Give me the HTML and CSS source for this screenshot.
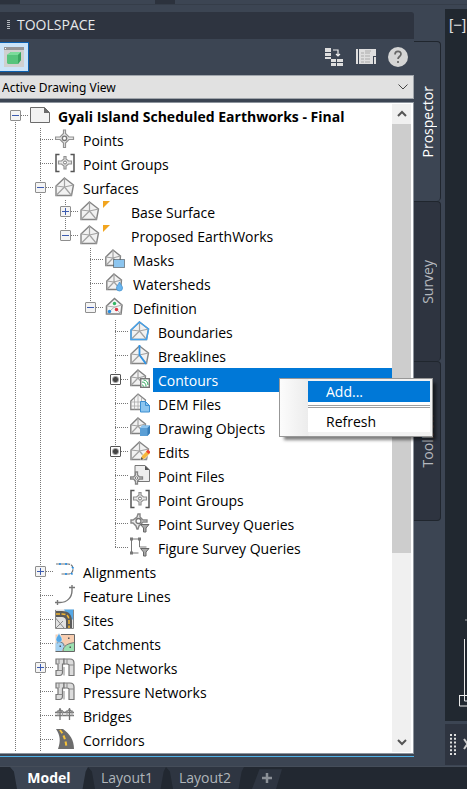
FILE: index.html
```
<!DOCTYPE html>
<html lang="en">
  <head>
    <meta charset="UTF-8">
    <meta name="viewport" content="width=device-width, initial-scale=1.0">
    <title>Toolspace</title>
    <link rel="stylesheet" href="styles.css">
  </head>

  <body>

    <!-- Icon sprite -->
    <svg class="sprite" aria-hidden="true">
      <symbol id="document" viewBox="0 0 20 20">
        <path d="M.5 2.5h14l5 5v10H.5z" fill="#f2f2f2" stroke="#6b6b6b"/>
        <path d="M14 2l6 6h-6z" fill="#6b6b6b"/>
      </symbol>
      <symbol id="points" viewBox="0 0 20 20">
        <path d="M8.500 1v3.500L5 8H.500v2.500H5l3.500 3.500v4.500h2V14l3.500-3.500h4.500V8H14l-3.500-3.500V1z" fill="#e8e8e8" stroke="#929292" stroke-width="1.200"/>
        <circle cx="9.500" cy="9.300" r="2.200" fill="#fff" stroke="#777" stroke-width="1.400"/>
      </symbol>
      <symbol id="point-group" viewBox="0 0 20 20">
        <path d="M4.500 1.500H1v17h3.500M15.500 1.500H19v17h-3.500" fill="none" stroke="#555" stroke-width="1.500"/>
        <path d="M9 3.500h2v2.500l2.500 2H16.500v3H13.500L11 13v3H9v-3l-2.500-2H3.500V8h3L9 6z" fill="#e8e8e8" stroke="#929292" stroke-width="1.200"/>
        <circle cx="10" cy="9.500" r="1.500" fill="#fff" stroke="#777"/>
      </symbol>
      <symbol id="surface" viewBox="0 0 20 20">
        <path d="M9.500 1L18.500 8 16.500 18.500H1V9z" fill="#f2f2f2" stroke="#858585" stroke-width="1.400"/>
        <path d="M9.500 1v9M1 9l8.500 1 9-2M1 18.500L9.500 10l7 8.500" fill="none" stroke="#a2a2a2" stroke-width="1.200"/>
      </symbol>
      <symbol id="small-surface" viewBox="0 0 20 20">
        <path d="M8 1l7.500 6-1 9.500H.8V8z" fill="#f2f2f2" stroke="#808080" stroke-width="1.400"/>
        <path d="M8 1v8M.8 8L8 9l7.500-2M.8 16.500L8 9l6.500 7.500" fill="none" stroke="#a2a2a2" stroke-width="1.200"/>
      </symbol>
      <symbol id="masks" viewBox="0 0 20 20">
        <use href="#small-surface"/>
        <rect x="8.500" y="10.500" width="11" height="8" fill="#8cc5ef" stroke="#333" stroke-dasharray="1 1"/>
      </symbol>
      <symbol id="watersheds" viewBox="0 0 20 20">
        <path d="M9 1l7.500 6-1 9.500H1.800V8z" fill="#f2f2f2" stroke="#808080" stroke-width="1.400"/>
        <path d="M9 1v8M1.800 8L9 9l7.500-2M1.800 16.500L9 9l6.500 7.500" fill="none" stroke="#a2a2a2" stroke-width="1.200"/>
        <path d="M14.500 9c1 2.500 3 4 3 6a3 3 0 0 1-6 0c0-2 2-3.500 3-6z" fill="#69b5ef" stroke="#4896d2" stroke-width=".8"/>
      </symbol>
      <symbol id="definition" viewBox="0 0 20 20">
        <path d="M9.500 1.500L17 8l-1 9H1.500V9z" fill="#f5f5f5" stroke="#808080" stroke-width="1.600"/>
        <path d="M1.500 9l8 1 7.500-2M1.500 17l8-7 6.500 7" fill="none" stroke="#b0b0b0"/>
        <circle cx="9.500" cy="6.500" r="1.700" fill="#30b562"/>
        <circle cx="11.500" cy="12.500" r="1.700" fill="#df3340"/>
        <circle cx="4.500" cy="14.500" r="1.700" fill="#258be0"/>
      </symbol>
      <symbol id="boundaries" viewBox="0 0 20 20">
        <use href="#surface"/>
        <path d="M9.500 1L18.500 8 16.500 18.500H1V9z" fill="none" stroke="#45a2ec" stroke-width="1.500"/>
      </symbol>
      <symbol id="breaklines" viewBox="0 0 20 20">
        <use href="#surface"/>
        <path d="M9.500 0v10l6.500 9" fill="none" stroke="#2d94e8" stroke-width="1.700"/>
      </symbol>
      <symbol id="contours" viewBox="0 0 20 20">
        <use href="#small-surface"/>
        <rect x="10.700" y="9.700" width="8.600" height="8.600" fill="#fff" stroke="#777" stroke-width="1.400"/>
        <path d="M12 13c3 0 4 2 4 4.500M12 16c1 0 1.500.500 1.500 1.500M13.500 11c2.500 0 4.500 2 4.500 5" fill="none" stroke="#32ad61"/>
      </symbol>
      <symbol id="dem" viewBox="0 0 20 20">
        <path d="M8 1l7.500 6-1 9.500H.8V8z" fill="#f5f5f5" stroke="#858585" stroke-width="1.300"/>
        <path d="M8 1v15.500M4.500 5v11.500M11.500 4v12.500M1 9h14M1 13h14" fill="none" stroke="#aaa" stroke-width=".8"/>
        <path d="M10.500 8.500h5l4 4v6.500h-9z" fill="#8cc5ef" stroke="#3c8ed0"/>
        <path d="M15.500 8.500v4h4" fill="none" stroke="#3c8ed0"/>
      </symbol>
      <symbol id="drawing-objects" viewBox="0 0 20 20">
        <use href="#small-surface"/>
        <path d="M10 11l2.500-2.500H20V16l-2.500 3H10z" fill="#5b9fd6"/>
        <path d="M10 11l2.500-2.500H20L17.500 11z" fill="#8cc4ee"/>
        <path d="M17.500 11L20 8.500V16l-2.500 3z" fill="#377db8"/>
      </symbol>
      <symbol id="edits" viewBox="0 0 20 20">
        <use href="#surface"/>
        <path d="M10.500 19l1-4 6-6 3 3-6 6z" fill="#f5b83d" stroke="#fff" stroke-width=".6"/>
        <path d="M16 10.500l2-2 2.500 2.500-2 2z" fill="#ee4433"/>
        <path d="M10.500 19l.8-3 2.200 2.200z" fill="#555"/>
      </symbol>
      <symbol id="point-files" viewBox="0 0 20 20">
        <path d="M5 .500h10l4.500 4.500v11.500H5z" fill="#eee" stroke="#777"/>
        <path d="M15 .500V5h4.500z" fill="#555"/>
        <path d="M5.500 7h2v3l2 2h3v2h-3l-2 2v3h-2v-3l-2-2h-3v-2h3l2-2z" fill="#eee" stroke="#858585" stroke-width="1.300"/>
        <circle cx="6.500" cy="13" r="1.300" fill="#fff" stroke="#777"/>
      </symbol>
      <symbol id="point-query" viewBox="0 0 20 20">
        <path d="M8 1h2v3l3 3h4v2h-4l-4 4-1 3H7l-1-3-3-3H1V7h2l4-3z" fill="#e8e8e8" stroke="#868686" stroke-width="1.400"/>
        <circle cx="8.500" cy="8" r="2.500" fill="#fff" stroke="#777" stroke-width="1.300"/>
        <path d="M10.500 11.500h8.500l-3 3.500v4h-2.500v-4z" fill="#aaa" stroke="#666"/>
      </symbol>
      <symbol id="figure-query" viewBox="0 0 20 20">
        <path d="M1.500 16V2h8v8h7" fill="none" stroke="#777"/>
        <path d="M1.500 16h7" stroke="#777"/>
        <path d="M0 .500h3v3H0zM8 .500h3v3H8zM0 14.500h3v3H0z" fill="#777"/>
        <path d="M10.500 11.500h8.500l-3 3.500v4h-2.500v-4z" fill="#aaa" stroke="#666"/>
      </symbol>
      <symbol id="alignments" viewBox="0 0 20 20">
        <path d="M1 3h12c3 0 5 2 5 5s-2 5-5 5H6" fill="none" stroke="#777" stroke-width="1.200" stroke-dasharray="4 1"/>
        <path d="M5 2v2M11 2v2M17 6l1.500 1.500M16 12l1.500 1.500M11 12v2" stroke="#258be0" stroke-width="1.700"/>
      </symbol>
      <symbol id="feature-lines" viewBox="0 0 20 20">
        <path d="M0 17.500h5c7 0 12-5 12-12V0" fill="none" stroke="#777" stroke-width="1.400"/>
        <path d="M2.500 15v5M14 2.500h6" stroke="#777" stroke-width="1.400"/>
      </symbol>
      <symbol id="sites" viewBox="0 0 20 20">
        <path d="M0 .500h19v19H0z" fill="#e2e2e2"/>
        <path d="M9 .500h10v10h-4z" fill="#55a8e6"/>
        <path d="M0 2h7c7 0 10 4 10 10v7h-6v-7c0-3-2-4-4-4H0z" fill="#5a5a5a"/>
        <path d="M1 5h6c5 0 7 2 7 7v7" fill="none" stroke="#f2b632" stroke-width="1.500" stroke-dasharray="4 1.500"/>
        <path d="M.500 9L9 19M1 19l7-7" stroke="#888"/>
        <path d="M.500 1v18.500h18V1" fill="none" stroke="#888"/>
      </symbol>
      <symbol id="catchments" viewBox="0 0 20 20">
        <path d="M.500 1.500h19v17H.500z" fill="#f7cdb0"/>
        <path d="M.500 10c5-3 9-1 9 3l-3 5.500h-6z" fill="#a5d2f2"/>
        <path d="M8 18.500c0-6 5-8 11.500-9v9z" fill="#9be0b0"/>
        <path d="M8 18.500c0-6 5-8 11.500-9M2 10c4-2 7 0 7 3" fill="none" stroke="#777"/>
        <path d="M.500 18.500h19v-17H6" fill="none" stroke="#666"/>
        <path d="M4 0c1 3 3 4 3 6.500a3 3 0 0 1-6 0C1 4 3 3 4 0z" fill="#55a8e6" stroke="#fff" stroke-width=".4"/>
        <path d="M13 4.500h1.500V6H13zM4.500 12.500H6V14H4.500zM14.500 13.500H16V15h-1.500z" fill="#555"/>
      </symbol>
      <symbol id="pipes" viewBox="0 0 20 20">
        <path d="M1 2h8v5H7.500v8c0 2-1 3.500-3 3.500H1v-5h2V7H1z" fill="#dcdcdc" stroke="#777" stroke-width="1.200"/>
        <path d="M9 2h6c3 0 4 1 4 4v12.500h-5V8c0-1-1-1-2-1H9z" fill="#dcdcdc" stroke="#777" stroke-width="1.200"/>
        <path d="M3 13.500h4.500M14 8h5M12 2v5M4 2v5M9 10v8.500" stroke="#8a8a8a"/>
      </symbol>
      <symbol id="bridges" viewBox="0 0 20 20">
        <path d="M0 7.500h19M0 10.500h19M5 3v12M14.500 3v12M1 7.500c2-1 4-2 4-4 0 2 2 3 4.500 4 2.500-1 5-2 5-4 0 2 2 3 4 4" fill="none" stroke="#777" stroke-width="1.300"/>
        <path d="M3 5v6M7.500 5v6M12 5v6M17 5v6" stroke="#999"/>
      </symbol>
      <symbol id="corridors" viewBox="0 0 20 20">
        <path d="M1 0h7c7 5 11 11 11 20H3C6 12 5 6 1 0z" fill="#6c6c6c"/>
        <path d="M5 1c4 5 6 11 6.500 18" fill="none" stroke="#f6c238" stroke-width="2" stroke-dasharray="4 2.500"/>
      </symbol>
    </svg>

    <div class="ribbon-edge"></div>

    <div class="workspace">
      <section class="palette">
        <h1 class="palette-title"><span class="grip"></span>TOOLSPACE</h1>

        <div class="toolbar">
          <button type="button" class="tool tool-active" aria-label="Active drawing">
            <svg viewBox="0 0 20 20"><path d="M0 0h20v20H0z" fill="#d0d0d0"/><path d="M0 0h20v3H0z" fill="#969696"/><path d="M1 1h1v1H1z" fill="#fff"/><path d="M3 8l4-3h10v8l-3 4H4l-1-1z" fill="#56c47c"/><path d="M3 8l4-3h10l-3 3z" fill="#7bdc9b"/><path d="M14 8l3-3v8l-3 4z" fill="#39a660"/></svg>
          </button>
          <button type="button" class="tool tool-first" aria-label="Item view">
            <svg viewBox="0 0 20 20"><path d="M1 1h6v4H1zM1 6h6v3H1zM1 10h6v2H1zM7 12h5v3H7zM13 12h6v3h-6zM7 16h5v3H7zM13 16h6v3h-6z" fill="#dedede"/><path d="M9 3h5v6M12 7l2 2 2-2" fill="none" stroke="#eee" stroke-width="1.200"/></svg>
          </button>
          <button type="button" class="tool" aria-label="Panorama">
            <svg viewBox="0 0 20 20"><path d="M0 2h2v15H0zM3 2h17v7h-3v8H3zM18 10h2v7h-2z" fill="#dedede"/><path d="M5 6h3M9 4h6M9 6h5M5 9h3M9 9h5M5 12h3M9 12h5M5 15h3M9 15h5" stroke="#aaa"/></svg>
          </button>
          <button type="button" class="tool" aria-label="Help">
            <svg viewBox="0 0 20 20"><circle cx="10" cy="10" r="10" fill="#d5d5d5"/><path d="M7 7.500c0-4 6-4 6-.5 0 2.500-3 2.500-3 5M10 14v2" fill="none" stroke="#666" stroke-width="1.700"/></svg>
          </button>
        </div>

        <div class="view-picker">
          <select aria-label="View"><option>Active Drawing View</option></select>
          <svg class="chevron" viewBox="0 0 10 6"><path d="M.500.500L5 5 9.500.500" fill="none" stroke="#444"/></svg>
        </div>

        <div class="tree-pane">
          <ul class="tree">
            <li class="root">
              <div class="row"><button type="button" class="toggle" aria-label="Collapse"></button><svg class="icon"><use href="#document"/></svg><span class="label">Gyali Island Scheduled Earthworks - Final</span></div>
              <ul>
                <li><div class="row"><svg class="icon"><use href="#points"/></svg><span class="label">Points</span></div></li>
                <li><div class="row"><svg class="icon"><use href="#point-group"/></svg><span class="label">Point Groups</span></div></li>
                <li>
                  <div class="row"><button type="button" class="toggle" aria-label="Collapse"></button><svg class="icon"><use href="#surface"/></svg><span class="label">Surfaces</span></div>
                  <ul>
                    <li><div class="row"><button type="button" class="toggle plus" aria-label="Expand"></button><svg class="icon"><use href="#surface"/></svg><span class="flag"></span><span class="label">Base Surface</span></div></li>
                    <li class="last">
                      <div class="row"><button type="button" class="toggle" aria-label="Collapse"></button><svg class="icon"><use href="#surface"/></svg><span class="flag"></span><span class="label">Proposed EarthWorks</span></div>
                      <ul>
                        <li><div class="row"><svg class="icon"><use href="#masks"/></svg><span class="label">Masks</span></div></li>
                        <li><div class="row"><svg class="icon"><use href="#watersheds"/></svg><span class="label">Watersheds</span></div></li>
                        <li class="last">
                          <div class="row"><button type="button" class="toggle" aria-label="Collapse"></button><svg class="icon"><use href="#definition"/></svg><span class="label">Definition</span></div>
                          <ul>
                            <li><div class="row"><svg class="icon"><use href="#boundaries"/></svg><span class="label">Boundaries</span></div></li>
                            <li><div class="row"><svg class="icon"><use href="#breaklines"/></svg><span class="label">Breaklines</span></div></li>
                            <li>
                              <div class="row selected">
                                <button type="button" class="toggle dot" aria-label="Expand"></button><svg class="icon"><use href="#contours"/></svg><span class="label">Contours</span>
                                <div class="menu">
                                  <div class="menu-items">
                                    <button type="button" class="menu-item active">Add...</button>
                                    <hr>
                                    <button type="button" class="menu-item">Refresh</button>
                                  </div>
                                </div>
                              </div>
                            </li>
                            <li><div class="row"><svg class="icon"><use href="#dem"/></svg><span class="label">DEM Files</span></div></li>
                            <li><div class="row"><svg class="icon"><use href="#drawing-objects"/></svg><span class="label">Drawing Objects</span></div></li>
                            <li><div class="row"><button type="button" class="toggle dot" aria-label="Expand"></button><svg class="icon"><use href="#edits"/></svg><span class="label">Edits</span></div></li>
                            <li><div class="row"><svg class="icon"><use href="#point-files"/></svg><span class="label">Point Files</span></div></li>
                            <li><div class="row"><svg class="icon"><use href="#point-group"/></svg><span class="label">Point Groups</span></div></li>
                            <li><div class="row"><svg class="icon"><use href="#point-query"/></svg><span class="label">Point Survey Queries</span></div></li>
                            <li class="last"><div class="row"><svg class="icon"><use href="#figure-query"/></svg><span class="label">Figure Survey Queries</span></div></li>
                          </ul>
                        </li>
                      </ul>
                    </li>
                  </ul>
                </li>
                <li><div class="row"><button type="button" class="toggle plus" aria-label="Expand"></button><svg class="icon"><use href="#alignments"/></svg><span class="label">Alignments</span></div></li>
                <li><div class="row"><svg class="icon"><use href="#feature-lines"/></svg><span class="label">Feature Lines</span></div></li>
                <li><div class="row"><svg class="icon"><use href="#sites"/></svg><span class="label">Sites</span></div></li>
                <li><div class="row"><svg class="icon"><use href="#catchments"/></svg><span class="label">Catchments</span></div></li>
                <li><div class="row"><button type="button" class="toggle plus" aria-label="Expand"></button><svg class="icon"><use href="#pipes"/></svg><span class="label">Pipe Networks</span></div></li>
                <li><div class="row"><svg class="icon"><use href="#pipes"/></svg><span class="label">Pressure Networks</span></div></li>
                <li><div class="row"><svg class="icon"><use href="#bridges"/></svg><span class="label">Bridges</span></div></li>
                <li><div class="row"><svg class="icon"><use href="#corridors"/></svg><span class="label">Corridors</span></div></li>
              </ul>
            </li>
          </ul>

          <div class="scrollbar">
            <button type="button" class="scroll-arrow" aria-label="Scroll up"><svg viewBox="0 0 10 8"><path d="M1 6l4-4 4 4" fill="none" stroke="#555" stroke-width="2"/></svg></button>
            <div class="scroll-thumb"></div>
            <div class="scroll-rest"></div>
            <button type="button" class="scroll-arrow" aria-label="Scroll down"><svg viewBox="0 0 10 8"><path d="M1 2l4 4 4-4" fill="none" stroke="#555" stroke-width="2"/></svg></button>
          </div>
        </div>
      </section>

      <nav class="side-tabs">
        <button type="button" class="side-tab current"><span>Prospector</span></button>
        <button type="button" class="side-tab"><span>Survey</span></button>
        <button type="button" class="side-tab"><span>Toolbox</span></button>
      </nav>

      <div class="drawing">
        <div class="canvas">
          <span class="viewport-control">[−]</span>
          <svg class="ucs" viewBox="0 0 22 104"><path d="M19.500 22v62H22M14.500 78.500H22M14.500 78v11H22" fill="none" stroke="#e8e8e8"/><path d="M21 2v2" stroke="#aaa"/></svg>
        </div>
        <div class="command-line">
          <svg viewBox="0 0 22 40"><path d="M6 10v21M10 10v21" stroke="#e0e0e0" stroke-width="2" stroke-dasharray="2 1.800"/><path d="M19 15l7 10M19 25l7-10" stroke="#ccc" stroke-width="2"/></svg>
        </div>
      </div>
    </div>

    <nav class="layout-tabs">
      <button type="button" class="layout-tab current">Model</button>
      <button type="button" class="layout-tab">Layout1</button>
      <button type="button" class="layout-tab">Layout2</button>
      <button type="button" class="layout-tab add" aria-label="New layout"><svg viewBox="0 0 12 12"><path d="M6 1v10M1 6h10" stroke="#8b9097" stroke-width="2.500"/></svg></button>
    </nav>

  </body>
</html>
```
FILE: styles.css
```
html {
  box-sizing: border-box;
}

*,
*::before,
*::after {
  box-sizing: inherit;
}

body {
  display: flex;
  flex-direction: column;
  min-height: 100vh;
  margin: 0;
  overflow: hidden;
  background-color: #3c4553;
  color: #000;
  font-family: "Open Sans", "Noto Sans", sans-serif;
  font-size: 14px;
}

button {
  margin: 0;
  padding: 0;
  border: 0;
  background: none;
  color: inherit;
  font: inherit;
}

svg {
  display: block;
}

.sprite {
  position: absolute;
  width: 0;
  height: 0;
}

.ribbon-edge {
  height: 9px;
  background: linear-gradient(#353d49, #353d49) 0 4px / 100% 1px no-repeat;
}

.ribbon-edge::before {
  content: "";
  display: block;
  width: 175px;
  height: 4px;
  background: linear-gradient(to right, #2c323d 20px, #3c4553 20px 155px, #2c323d 155px);
}

.workspace {
  display: flex;
  flex: 1;
}

/* Palette */

.palette {
  display: flex;
  flex: 1;
  flex-direction: column;
  min-width: 0;
  padding: 3px 0 12px;
}

.palette-title {
  display: flex;
  align-items: center;
  height: 27px;
  margin: 0;
  padding: 0 0 2px 7px;
  border-radius: 0 3px 0 0;
  background-color: #2e3440;
  color: #e6e8ea;
  font-size: 14px;
  font-weight: 400;
}

.grip {
  width: 3px;
  height: 9px;
  margin-right: 7px;
  background: repeating-linear-gradient(#b5b9bf 0 1px, transparent 1px 2px);
}

.toolbar {
  display: flex;
  align-items: center;
  height: 36px;
  padding-right: 6px;
  gap: 12px;
}

.tool svg {
  width: 20px;
  height: 20px;
}

.tool-active {
  padding: 4px;
  border: 1px solid #0b60b0;
  border-left: 0;
  background-color: #cbe4f8;
}

.tool-first {
  margin-left: auto;
}

.view-picker {
  display: grid;
  align-items: center;
  height: 24px;
  border: 1px solid #a0a5ab;
  border-left: 0;
  background-color: #e1e1e1;
}

.view-picker select,
.chevron {
  grid-area: 1 / 1;
}

.view-picker select {
  appearance: none;
  width: 100%;
  padding: 0 24px 0 2px;
  border: 0;
  background: none;
  color: #000;
  font-family: "Noto Sans", sans-serif;
  font-size: 12px;
}

.chevron {
  justify-self: end;
  width: 10px;
  height: 6px;
  margin-right: 5px;
  pointer-events: none;
}

.tree-pane {
  display: flex;
  flex: 1;
  margin-top: 3px;
  padding: 1px 2px 1px 0;
  border: 1px solid #8d949d;
  border-left: 0;
  background-color: #fff;
  box-shadow: 0 2px #3c4553, 0 3px #4fb0e6;
}

/* Tree */

.tree,
.tree ul {
  margin: 0;
  padding: 0;
  list-style: none;
}

.tree {
  flex: 1;
  min-width: 0;
}

.tree ul {
  padding-left: 25px;
}

/* dotted connectors: trunk, then branch */
.tree li {
  background-image:
    repeating-linear-gradient(to bottom, #777 0 1px, transparent 1px 2px),
    repeating-linear-gradient(to right, #777 0 1px, transparent 1px 2px);
  background-position: 15px 0, 15px 11px;
  background-size: 1px 100%, 13px 1px;
  background-repeat: no-repeat;
}

.tree .last {
  background-size: 1px 12px, 13px 1px;
}

.tree .root {
  background-position: 15px 12px, 15px 11px;
}

.row {
  display: flex;
  position: relative;
  align-items: center;
  height: 24px;
  padding-left: 30px;
}

.toggle {
  width: 11px;
  height: 11px;
  margin: 0 9px 2px -20px;
  border: 1px solid #8e8e8e;
  border-radius: 1px;
  background: linear-gradient(#3c5bb0, #3c5bb0) center / 7px 1px no-repeat #f4f4f4;
}

.plus {
  background-image: linear-gradient(#3c5bb0, #3c5bb0), linear-gradient(#3c5bb0, #3c5bb0);
  background-size: 7px 1px, 1px 7px;
}

.dot {
  border-color: #555;
  background: radial-gradient(circle, #444 2px, #fff 4px);
}

.icon {
  flex: none;
  width: 20px;
  height: 20px;
  margin-bottom: 2px;
}

.flag {
  align-self: flex-start;
  width: 7px;
  height: 7px;
  margin: 1px 13px 0 3px;
  background-color: #f2a51f;
  clip-path: polygon(0 0, 100% 0, 0 100%);
}

.label {
  flex: 1;
  height: 24px;
  margin-left: 3px;
  padding-left: 5px;
  line-height: 26px;
  white-space: nowrap;
}

.root > .row > .label {
  font-weight: 400;
}

.tree > .root > .row > .label {
  font-weight: 700;
}

.selected .label {
  background-color: #0078d7;
  color: #fff;
}

/* Scrollbar */

.scrollbar {
  display: flex;
  flex-direction: column;
  width: 19px;
  background-color: #f0f0f0;
}

.scroll-arrow {
  display: grid;
  place-items: center;
  height: 20px;
}

.scroll-arrow svg {
  width: 10px;
  height: 8px;
}

.scroll-thumb {
  flex: 12;
  background-color: #cdcdcd;
}

.scroll-rest {
  flex: 5;
}

/* Context menu */

.menu {
  position: absolute;
  z-index: 1;
  top: 10px;
  left: 179px;
  width: 154px;
  padding: 2px 2px 4px;
  border: 1px solid #979797;
  background: linear-gradient(to right, #fcfcfc, #ececec 28px, #f2f2f2 29px);
  box-shadow: 4px 4px 3px -1px rgba(0, 0, 0, .5);
}

.menu-items {
  margin-left: 26px;
  background-color: #fff;
}

.menu-item {
  display: block;
  width: 100%;
  height: 21px;
  padding-left: 18px;
  line-height: 21px;
  text-align: left;
}

.menu-item.active {
  background-color: #0078d7;
  color: #fff;
}

.menu hr {
  height: 3px;
  margin: 3px 0;
  border: solid #a0a0a0;
  border-width: 1px 0;
}

/* Palette tabs */

.side-tabs {
  display: flex;
  flex-direction: column;
  width: 31px;
  padding: 32px 4px 0 0;
}

.side-tab {
  display: grid;
  place-items: center;
  height: 160px;
  border: solid #20262e;
  border-width: 1px 1px 0 0;
  border-radius: 0 4px 4px 0;
  background-color: #2e3440;
  color: #b4b8be;
}

.side-tab:last-child {
  border-bottom-width: 1px;
}

.side-tab.current {
  background-color: #3c4553;
  color: #fff;
}

.side-tab span {
  writing-mode: vertical-rl;
  transform: rotate(180deg);
}

/* Drawing area */

.drawing {
  display: flex;
  flex-direction: column;
  width: 22px;
  gap: 3px;
  padding-bottom: 1px;
}

.canvas {
  display: flex;
  flex: 1;
  flex-direction: column;
  justify-content: space-between;
  overflow: hidden;
  background-color: #212830;
}

.viewport-control {
  padding: 7px 0 0 4px;
  color: #e0e0e0;
  font-family: "Liberation Sans", sans-serif;
  font-size: 15px;
}

.ucs {
  width: 22px;
  height: 104px;
}

.command-line {
  height: 41px;
  overflow: hidden;
  background-color: #2e3440;
}

/* Layout tabs */

.layout-tabs {
  display: flex;
  height: 23px;
  padding-left: 10px;
  border-top: 1px solid #454d59;
  background-color: #222831;
}

.layout-tab {
  width: 78px;
  padding-bottom: 1px;
  background-color: #2e3541;
  clip-path: polygon(0 0, 100% 0, 97% 20%, 93% 100%, 9% 100%, 5% 20%);
  color: #b0b5bb;
}

.layout-tab.current {
  background-color: #3c4553;
  color: #fff;
  font-weight: 700;
}

.layout-tab.add {
  display: grid;
  place-items: center;
  width: 30px;
  margin-left: 8px;
  clip-path: polygon(25% 10%, 100% 10%, 80% 100%, 0 100%);
}

.add svg {
  width: 12px;
  height: 12px;
}
```
